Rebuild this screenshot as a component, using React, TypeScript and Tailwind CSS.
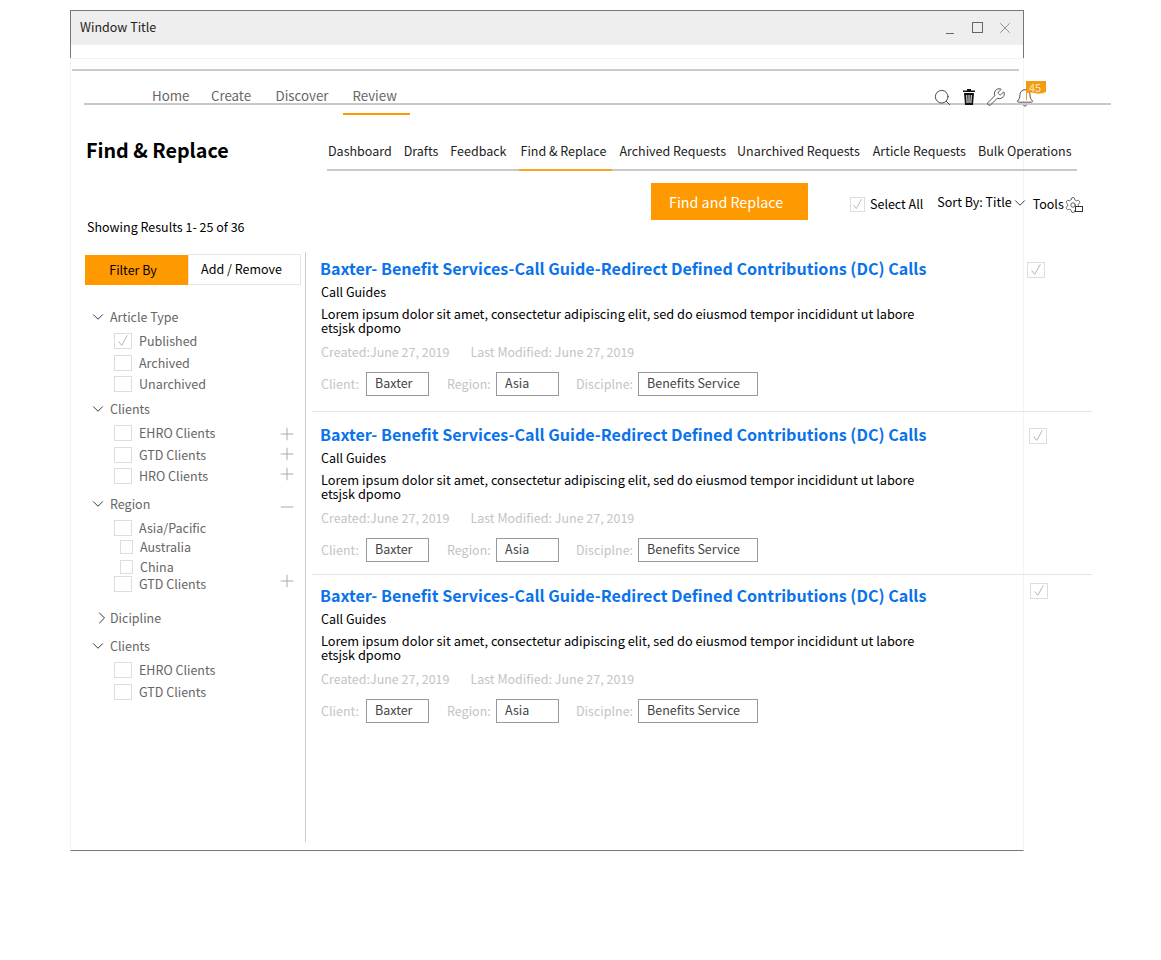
import React from "react";
import { Bell, ChevronDown, ChevronRight, Minus, Plus, Search, Settings, Wrench, X } from "lucide-react";

const tick = (
  <svg viewBox="0 0 16 16" className="w-full h-full" fill="none" stroke="#aaa" strokeWidth="1">
    <path d="M3 8.500 L6.500 13 L13 1.500" />
  </svg>
);

function Box({ checked, size = "w-[18px] h-[16px]" }: { checked?: boolean; size?: string }) {
  return <span className={`${size} shrink-0 block border border-[#ddd] bg-white`}>{checked && tick}</span>;
}

function Row({ gap, label, box = "large", checked, icon, iconClass = "" }: { gap: string; label: string; box?: "large" | "small"; checked?: boolean; icon?: boolean; iconClass?: string }) {
  return (
    <div className={`${gap} h-5 flex items-center text-[12.500px] leading-5 text-[#666]`}>
      {box === "large" ? (
        <div className="ml-[43px] flex items-center">
          <Box checked={checked} />
          <span className="ml-[7px]">{label}</span>
        </div>
      ) : (
        <div className="ml-[49px] flex items-center">
          <Box size="w-[13px] h-[14px]" />
          <span className="ml-[7px]">{label}</span>
        </div>
      )}
      {icon && <Plus size={20} strokeWidth={1.2} className={`ml-auto mr-[8px] text-[#aaa] ${iconClass}`} />}
    </div>
  );
}

function Group({ gap, label, collapsed, minus }: { gap: string; label: string; collapsed?: boolean; minus?: boolean }) {
  return (
    <div className={`${gap} h-5 flex items-center text-[12.500px] leading-5 text-[#666]`}>
      {collapsed ? (
        <ChevronRight size={20} strokeWidth={1.2} className="ml-[21px] mr-[-2px] shrink-0 text-[#333]" />
      ) : (
        <ChevronDown size={18} strokeWidth={1.3} className="ml-[18px] mr-[3px] shrink-0 text-[#333]" />
      )}
      <span>{label}</span>
      {minus && <Minus size={20} strokeWidth={1.2} className="ml-auto mr-[8px] mt-[6px] text-[#aaa]" />}
    </div>
  );
}

function Field({ label, value, gap, labelWidth, width }: { label: string; value: string; gap: string; labelWidth: string; width: string }) {
  return (
    <div className={`${gap} flex items-center`}>
      <span className={`${labelWidth} text-[#c4c4c4]`}>{label}</span>
      <span className={`${width} h-6 border border-[#999] pl-2 leading-[20px] text-[#444]`}>{value}</span>
    </div>
  );
}

function Article({ top, bottom = "", checkClass }: { top: string; bottom?: string; checkClass: string }) {
  return (
    <div className={`${top} ${bottom} relative pl-2 text-[12.500px]`}>
      <h2 className="text-[16.100px] leading-6 font-bold text-[#0a73eb] whitespace-nowrap">
        Baxter- Benefit Services-Call Guide-Redirect Defined Contributions (DC) Calls
      </h2>
      <div className="ml-px mt-[2px] leading-[20px] text-black">Call Guides</div>
      <p className="ml-px mt-[5px] w-[610px] text-[12.750px] leading-[14px] text-black">
        Lorem ipsum dolor sit amet, consectetur adipiscing elit, sed do eiusmod tempor incididunt ut labore etsjsk dpomo
      </p>
      <div className="ml-px mt-[7px] flex leading-5 text-[#c4c4c4]">
        <span>Created:June 27, 2019</span>
        <span className="ml-[21px]">Last Modified: June 27, 2019</span>
      </div>
      <div className="ml-px mt-[10px] flex">
        <Field label="Client:" value="Baxter" gap="ml-0" labelWidth="w-[45px]" width="w-[63px]" />
        <Field label="Region:" value="Asia" gap="ml-[18px]" labelWidth="w-[49px]" width="w-[63px]" />
        <Field label="Disciplne:" value="Benefits Service" gap="ml-[17px]" labelWidth="w-[62px]" width="w-[120px]" />
      </div>
      <div className={`absolute ${checkClass}`}>
        <Box checked />
      </div>
    </div>
  );
}

const tabs = [
  { label: "Dashboard", gap: "ml-[1px]" },
  { label: "Drafts", gap: "ml-[12px]" },
  { label: "Feedback", gap: "ml-[12px]" },
  { label: "Find & Replace", gap: "ml-[14px]" },
  { label: "Archived Requests", gap: "ml-[13px]" },
  { label: "Unarchived Requests", gap: "ml-[11px]" },
  { label: "Article Requests", gap: "ml-[13px]" },
  { label: "Bulk Operations", gap: "ml-[12px]" },
];

export default function App() {
  return (
    <div className="w-[1161px] h-[960px] bg-white pl-[70px] pt-[10px] font-['Noto_Sans_CJK_SC',sans-serif] text-black overflow-hidden">
      {/* window chrome */}
      <div className="w-[954px] h-[48px] border-x border-t border-[#777]">
        <div className="h-[34px] bg-[#eee] flex items-center pl-[9px] text-[12.500px] text-[#222]">
          <span className="mb-[1px]">Window Title</span>
          <div className="ml-auto flex items-center text-[#666]">
            <span className="w-2 h-px bg-[#666] mt-[10px]" />
            <span className="ml-[18px] w-[11px] h-[11px] border border-[#666] mb-[1px]" />
            <X size={18} strokeWidth={0.9} className="ml-[13px] mr-[9px] mb-[1px]" />
          </div>
        </div>
      </div>

      <div className="w-[954px] h-[793px] border-x border-t border-[#f3f3f3] border-b-[#777] border-b">
        <div className="ml-px mt-[10px] w-[947px] h-[2px] bg-[#ccc]" />

        {/* main nav */}
        <div className="relative ml-[13px] w-[1027px] h-[34px] border-b-2 border-[#c8c8c8] flex items-end text-[13.300px] leading-5 text-[#666]">
          <span className="ml-[68px] mb-[-3px]">Home</span>
          <span className="ml-[21.500px] mb-[-3px]">Create</span>
          <span className="ml-[24.500px] mb-[-3px]">Discover</span>
          <span className="relative ml-[24px] mb-[-3px]">
            Review
            <span className="absolute left-[-9px] top-[27px] w-[67px] h-[2px] bg-[#f90]" />
          </span>
          <div className="ml-auto mr-[76px] mb-[-5px] flex items-end text-black">
            <Search size={19} strokeWidth={1.1} className="text-[#333] mb-[1px]" />
            <svg viewBox="0 0 12 16" className="ml-[11px] mb-[3px] w-[12px] h-[16px]" fill="#111">
              <path d="M4 0h4v1.500h4V3H0V1.500h4zM1 4h10l-1 12H2zM3.200 6l.4 8h1L4.200 6zM5.500 6v8h1V6zM7.800 6l-.4 8h1l.4-8z" fillRule="evenodd" />
            </svg>
            <Wrench size={20} strokeWidth={1} className="ml-[11px] mb-[1px] text-[#333]" />
            <div className="relative ml-[9px]">
              <Bell size={20} strokeWidth={1} className="text-[#333]" />
              <svg viewBox="0 0 20 20" className="absolute left-[11px] top-[-7px] w-[20px] h-[20px]" fill="#f39c12">
                <path d="M0 0H20V11Q14 14 8 12Q4 11 1 12V19H0Z" />
              </svg>
              <span className="absolute left-[14px] top-[-7px] text-[#fde6bd] text-[11px] leading-[12px]">45</span>
            </div>
          </div>
        </div>

        {/* page header */}
        <div className="flex mt-[25px]">
          <h1 className="ml-[15px] mt-[5px] w-[241px] shrink-0 text-[19.700px] leading-[30px] font-bold">Find &amp; Replace</h1>
          <div className="w-[750px] shrink-0 h-[41px] border-b-2 border-[#c8c8c8] flex items-start pt-[11px] text-[12.500px] leading-5 text-[#222] whitespace-nowrap">
            {tabs.map((tab) => (
              <span key={tab.label} className={`${tab.gap} relative`}>
                {tab.label}
                {tab.label === "Find & Replace" && <span className="absolute left-[-1px] top-[28px] w-[93px] h-[2px] bg-[#f5a623]" />}
              </span>
            ))}
          </div>
        </div>

        {/* actions */}
        <div className="flex items-start mt-[12px] ml-[580px] text-[12.500px] leading-5 whitespace-nowrap">
          <button className="w-[157px] shrink-0 h-[37px] bg-[#f90] text-white text-[14.300px] leading-[37px] pl-[18px] text-left">Find and Replace</button>
          <div className="ml-[42px] mt-[11px] flex items-center shrink-0">
            <Box checked size="w-[15px] h-[15px]" />
            <span className="ml-[5px]">Select All</span>
          </div>
          <div className="ml-[14px] mt-[9px] flex items-center shrink-0">
            <span>Sort By: Title</span>
            <ChevronDown size={18} strokeWidth={1} className="ml-[-1px] mt-[2px]" />
          </div>
          <div className="ml-[4px] mt-[10px] flex items-center shrink-0">
            <span>Tools</span>
            <div className="relative mt-[3px]">
              <Settings size={18} strokeWidth={1} className="text-[#333]" />
              <span className="absolute left-[11px] top-[10px] w-[8px] h-[6px] border border-[#333] bg-white" />
            </div>
          </div>
        </div>

        <div className="ml-[16px] -mt-[3px] text-[12.500px] leading-5">Showing Results 1- 25 of 36</div>

        {/* body */}
        <div className="flex mt-[15px] h-[590px]">
          <aside className="w-[235px] shrink-0 border-r border-[#ccc]">
            <div className="ml-[14px] mt-[2px] flex h-[31px] text-[12.500px]">
              <div className="w-[103px] h-[30px] bg-[#f90] flex items-center justify-center mt-px pr-[7px]">Filter By</div>
              <div className="w-[113px] border border-[#e5e5e5] flex items-center justify-center pr-[6px]">Add / Remove</div>
            </div>
            <Group gap="mt-[22px]" label="Article Type" />
            <Row gap="mt-[4px]" label="Published" checked />
            <Row gap="mt-[2px]" label="Archived" />
            <Row gap="mt-[1px]" label="Unarchived" />
            <Group gap="mt-[5px]" label="Clients" />
            <Row gap="mt-[4px]" label="EHRO Clients" icon iconClass="mt-[2px]" />
            <Row gap="mt-[2px]" label="GTD Clients" icon iconClass="mb-[2px]" />
            <Row gap="mt-[1px]" label="HRO Clients" icon iconClass="mb-[4px]" />
            <Group gap="mt-[8px]" label="Region" minus />
            <Row gap="mt-[4px]" label="Asia/Pacific" />
            <Row gap="-mt-px" label="Australia" box="small" />
            <Row gap="mt-0" label="China" box="small" />
            <Row gap="-mt-[3px]" label="GTD Clients" icon iconClass="mb-[6px]" />
            <Group gap="mt-[14px]" label="Dicipline" collapsed />
            <Group gap="mt-[8px]" label="Clients" />
            <Row gap="mt-[4px]" label="EHRO Clients" />
            <Row gap="mt-[2px]" label="GTD Clients" />
          </aside>

          <main className="ml-[6px] w-[780px] shrink-0">
            <Article top="pt-[4px]" bottom="pb-[15px] border-b border-[#e5e5e5]" checkClass="left-[715px] top-[10px]" />
            <Article top="pt-[10px]" bottom="pb-[12px] border-b border-[#e5e5e5]" checkClass="left-[717px] top-[16px]" />
            <Article top="pt-[8px]" checkClass="left-[718px] top-[8px]" />
          </main>
        </div>
      </div>
    </div>
  );
}
